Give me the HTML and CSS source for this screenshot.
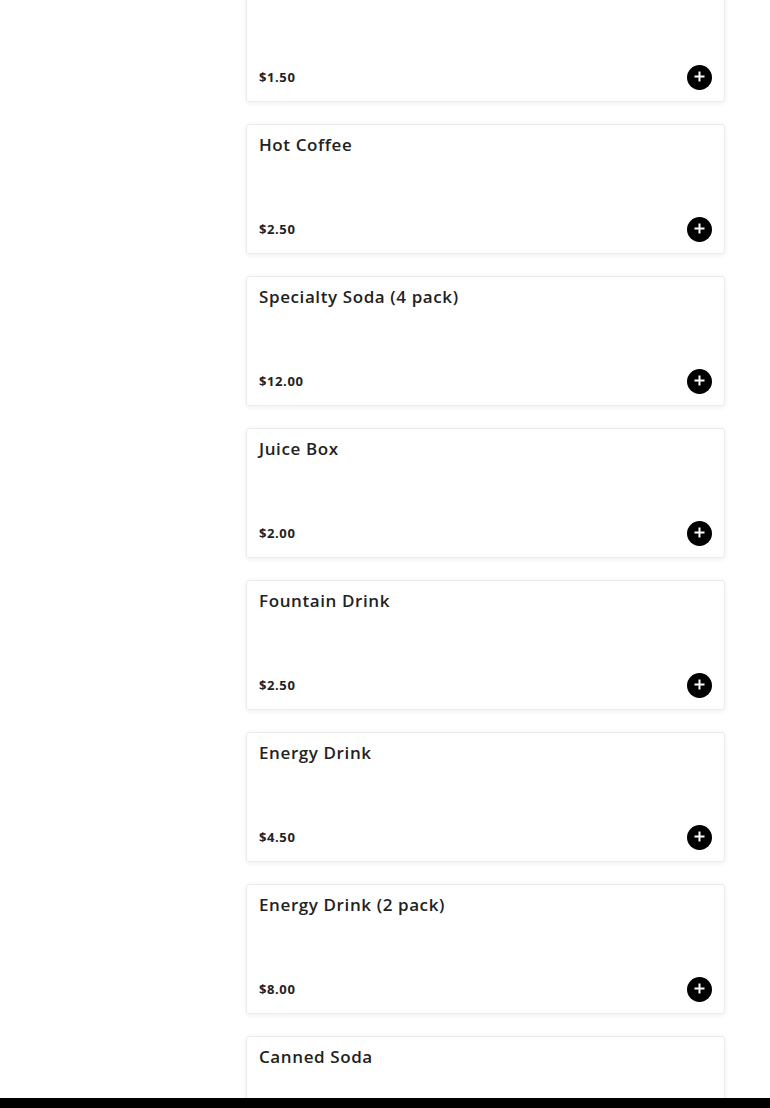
FILE: index.html
```html
<!DOCTYPE html>
<html lang="en">
<head>
<meta charset="utf-8">
<title>Menu</title>
<link rel="stylesheet" href="styles.css">
</head>
<body>
<div class="page">
  <aside class="sidebar"></aside>
  <main class="items">
    <div class="card"><h3 class="title"></h3><div class="row"><span class="price">$1.50</span><button class="add" aria-label="Add"><svg viewBox="0 0 25 25" width="25" height="25"><circle cx="12.5" cy="12.5" r="12.5" fill="#000"/><path d="M12.5 6.5v10M7.5 11.5h10" stroke="#fff" stroke-width="2"/></svg></button></div></div>
    <div class="card"><h3 class="title">Hot Coffee</h3><div class="row"><span class="price">$2.50</span><button class="add" aria-label="Add"><svg viewBox="0 0 25 25" width="25" height="25"><circle cx="12.5" cy="12.5" r="12.5" fill="#000"/><path d="M12.5 6.5v10M7.5 11.5h10" stroke="#fff" stroke-width="2"/></svg></button></div></div>
    <div class="card"><h3 class="title">Specialty Soda (4 pack)</h3><div class="row"><span class="price">$12.00</span><button class="add" aria-label="Add"><svg viewBox="0 0 25 25" width="25" height="25"><circle cx="12.5" cy="12.5" r="12.5" fill="#000"/><path d="M12.5 6.5v10M7.5 11.5h10" stroke="#fff" stroke-width="2"/></svg></button></div></div>
    <div class="card"><h3 class="title">Juice Box</h3><div class="row"><span class="price">$2.00</span><button class="add" aria-label="Add"><svg viewBox="0 0 25 25" width="25" height="25"><circle cx="12.5" cy="12.5" r="12.5" fill="#000"/><path d="M12.5 6.5v10M7.5 11.5h10" stroke="#fff" stroke-width="2"/></svg></button></div></div>
    <div class="card"><h3 class="title">Fountain Drink</h3><div class="row"><span class="price">$2.50</span><button class="add" aria-label="Add"><svg viewBox="0 0 25 25" width="25" height="25"><circle cx="12.5" cy="12.5" r="12.5" fill="#000"/><path d="M12.5 6.5v10M7.5 11.5h10" stroke="#fff" stroke-width="2"/></svg></button></div></div>
    <div class="card"><h3 class="title">Energy Drink</h3><div class="row"><span class="price">$4.50</span><button class="add" aria-label="Add"><svg viewBox="0 0 25 25" width="25" height="25"><circle cx="12.5" cy="12.5" r="12.5" fill="#000"/><path d="M12.5 6.5v10M7.5 11.5h10" stroke="#fff" stroke-width="2"/></svg></button></div></div>
    <div class="card"><h3 class="title">Energy Drink (2 pack)</h3><div class="row"><span class="price">$8.00</span><button class="add" aria-label="Add"><svg viewBox="0 0 25 25" width="25" height="25"><circle cx="12.5" cy="12.5" r="12.5" fill="#000"/><path d="M12.5 6.5v10M7.5 11.5h10" stroke="#fff" stroke-width="2"/></svg></button></div></div>
    <div class="card"><h3 class="title">Canned Soda</h3><div class="row"><span class="price"></span><button class="add" aria-label="Add"><svg viewBox="0 0 25 25" width="25" height="25"><circle cx="12.5" cy="12.5" r="12.5" fill="#000"/><path d="M12.5 6.5v10M7.5 11.5h10" stroke="#fff" stroke-width="2"/></svg></button></div></div>
  </main>
</div>
<footer class="footer-bar"></footer>
</body>
</html>
```
FILE: styles.css
```css
html, body {
  margin: 0;
  padding: 0;
  background: #fff;
  overflow: hidden;
}
body {
  font-family: "Open Sans", "Liberation Sans", sans-serif;
  color: #222;
}
.page {
  display: flex;
  margin-top: -28px;
}
.sidebar {
  width: 246px;
  flex: none;
}
.items {
  width: 479px;
  display: flex;
  flex-direction: column;
  gap: 22px;
}
.card {
  box-sizing: border-box;
  height: 130px;
  border: 1px solid #ececec;
  border-radius: 3px;
  box-shadow: 0 1px 5px rgba(0,0,0,0.07);
  padding: 8px 12px 12px 12px;
  display: flex;
  flex-direction: column;
  justify-content: space-between;
  background: #fff;
}
.title {
  margin: 0;
  min-height: 24px;
  font-size: 17px;
  line-height: 24px;
  font-weight: 600;
  color: #222;
  letter-spacing: 0.6px;
}
.row {
  display: flex;
  align-items: center;
  justify-content: space-between;
}
.price {
  font-size: 13px;
  font-weight: 700;
  letter-spacing: 0.6px;
  color: #222;
}
.add {
  border: 0;
  padding: 0;
  margin: 0;
  background: none;
  width: 25px;
  height: 25px;
  display: block;
  transform: translateY(1px);
}
.add svg {
  display: block;
}
.footer-bar {
  position: fixed;
  left: 0;
  right: 0;
  bottom: 0;
  height: 10px;
  background: #000;
}
```
